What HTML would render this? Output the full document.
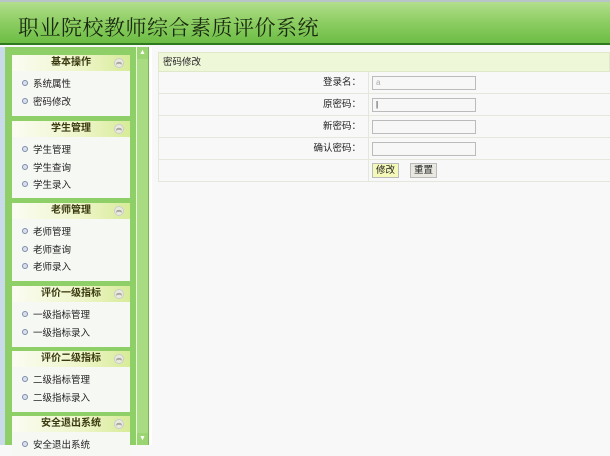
<!DOCTYPE html>
<html><head><meta charset="utf-8"><style>
*{margin:0;padding:0;box-sizing:border-box}
body{width:610px;height:445px;overflow:hidden;background:#f8f8f8;font-family:"Liberation Sans","Noto Sans CJK SC",sans-serif;font-size:10px;color:#222;position:relative}
.top{position:absolute;left:0;top:0;width:610px;height:2px;background:#b8c4c8}
.hdr{position:absolute;left:0;top:2px;width:610px;height:43px;background:linear-gradient(#b2de8c,#8ccd62 50%,#6dbd45);border-bottom:2px solid #2f7a1e}
.hdr h1{position:absolute;left:18px;top:10px;font-size:21px;font-weight:normal;color:#1a2a10;font-family:"Noto Serif CJK SC","Noto Sans CJK SC",serif;letter-spacing:0.5px}
.lstrip{position:absolute;left:0;top:47px;width:5px;height:398px;background:#c9dbe8}
.side{position:absolute;left:5px;top:47px;width:131px;height:398px;background:#8fcf68}
.scroll{position:absolute;left:136px;top:47px;width:13px;height:398px;background:#a9dc82;border-left:1px solid #e8f4dc;border-right:1px solid #7bb653}
.scroll .b{position:absolute;left:0;width:11px;height:12px;background:#9ad572;color:#fff;font-size:7px;text-align:center;line-height:12px}
.cborder{position:absolute;left:149px;top:47px;width:3px;height:398px;background:#fff}
.panel{position:absolute;left:12px;width:118px;background:#f6f8f4}
.ph{height:16px;background:linear-gradient(90deg,#fbfcf2,#eef5c8 60%,#d7eb98);text-align:center;font-weight:bold;color:#3a3a10;line-height:16px;font-size:10px;position:relative}
.ph i{position:absolute;right:6px;top:3px;width:10px;height:10px;border-radius:50%;background:#eaeadc;border:1px solid #ccc;font-style:normal;font-size:6px;line-height:8px;color:#777}
.it{height:17.5px;line-height:17.5px;padding-left:10px;font-size:9.5px}
.it:before{content:"";display:inline-block;width:4px;height:4px;border:1px solid #7890a8;border-radius:50%;margin-right:5px;vertical-align:1px;background:#dde}
.tbl{position:absolute;left:158px;top:52px;width:452px}
.row{height:22px;border-bottom:1px solid #e4e8dc;border-left:1px solid #e4e8dc;position:relative;background:#f8f8f8}
.row.h{height:20px;background:#eff7d9;border:1px solid #dfe8c8;line-height:19px;padding-left:4px;font-size:9.5px}
.lab{position:absolute;right:249px;top:0;line-height:22px;font-size:9.5px}
.sep{position:absolute;left:209px;top:0;width:1px;height:22px;background:#e4e8dc}
.inp{position:absolute;left:213px;top:4px;width:104px;height:14px;border:1px solid #bbb;background:#f7f7f7;font-size:8px;color:#aaa;padding-left:3px;line-height:12px}
.btn{position:absolute;top:3px;height:15px;font-size:9.5px;line-height:13px;padding:0 3px;border:1px solid #bbb}
</style></head><body>
<div class="top"></div>
<div class="hdr"><h1>职业院校教师综合素质评价系统</h1></div>
<div class="lstrip"></div>
<div class="side"></div>
<div class="scroll"><div class="b" style="top:0">▲</div><div class="b" style="bottom:0">▼</div></div>
<div class="cborder"></div>

<div class="panel" style="top:55px;height:61px"><div class="ph">基本操作<i>︽</i></div><div style="height:5px"></div><div class="it">系统属性</div><div class="it">密码修改</div></div>
<div class="panel" style="top:121px;height:77px"><div class="ph">学生管理<i>︽</i></div><div style="height:5px"></div><div class="it">学生管理</div><div class="it">学生查询</div><div class="it">学生录入</div></div>
<div class="panel" style="top:203px;height:78px"><div class="ph">老师管理<i>︽</i></div><div style="height:5px"></div><div class="it">老师管理</div><div class="it">老师查询</div><div class="it">老师录入</div></div>
<div class="panel" style="top:286px;height:61px"><div class="ph">评价一级指标<i>︽</i></div><div style="height:5px"></div><div class="it">一级指标管理</div><div class="it">一级指标录入</div></div>
<div class="panel" style="top:351px;height:61px"><div class="ph">评价二级指标<i>︽</i></div><div style="height:5px"></div><div class="it">二级指标管理</div><div class="it">二级指标录入</div></div>
<div class="panel" style="top:416px;height:40px"><div class="ph">安全退出系统<i>︽</i></div><div style="height:5px"></div><div class="it">安全退出系统</div></div>

<div class="tbl">
<div class="row h">密码修改</div>
<div class="row"><span class="lab">登录名：</span><span class="sep"></span><div class="inp">a</div></div>
<div class="row"><span class="lab">原密码：</span><span class="sep"></span><div class="inp" style="color:#000">|</div></div>
<div class="row"><span class="lab">新密码：</span><span class="sep"></span><div class="inp"></div></div>
<div class="row"><span class="lab">确认密码：</span><span class="sep"></span><div class="inp"></div></div>
<div class="row"><span class="sep"></span><div class="btn" style="left:213px;background:#f4f8b8">修改</div><div class="btn" style="left:251px;background:#e8e8e0">重置</div></div>
</div>
</body></html>
